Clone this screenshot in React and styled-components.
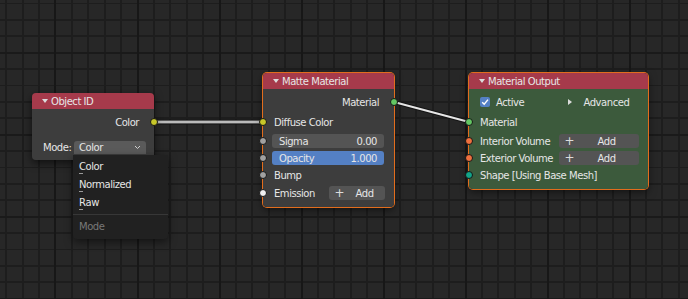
import React from 'react'
import styled, { createGlobalStyle } from 'styled-components'

const GlobalStyle = createGlobalStyle`
  html, body { margin: 0; padding: 0; background: #272727; }
  body { font-family: "DejaVu Sans", "Liberation Sans", sans-serif; }
`

// node editor canvas with the minor / major grid
const Canvas = styled.div`
  position: relative;
  width: 688px;
  height: 299px;
  overflow: hidden;
  background-color: #272727;
  background-image:
    repeating-linear-gradient(to right, #171717 54.5px 56.5px, transparent 56.5px 136.5px),
    repeating-linear-gradient(to bottom, #1a1a1a 51.8px 53.6px, transparent 53.6px 133.8px),
    repeating-linear-gradient(to right, #1d1d1d 5.5px 7.2px, transparent 7.2px 21.9px),
    repeating-linear-gradient(to bottom, #1d1d1d 2.6px 4.3px, transparent 4.3px 19px);
  font-size: 10px;
  letter-spacing: -0.45px;
  color: #e6e6e6;
`

const Wires = styled.svg`
  position: absolute;
  left: 0;
  top: 0;
`

const NodeFrame = styled.div`
  position: absolute;
  left: ${p => p.$x}px;
  top: ${p => p.$y}px;
  width: ${p => p.$w}px;
  border-radius: 4px;
  box-shadow: ${p => p.$selected
    ? '0 0 0 1px #e26d1d, 0 3px 8px rgba(0,0,0,0.55)'
    : '0 3px 8px rgba(0,0,0,0.6)'};
`

const Header = styled.div`
  height: 16px;
  display: flex;
  align-items: center;
  gap: 3px;
  padding-left: 10px;
  background: #a63a4b;
  border-radius: 4px 4px 0 0;
`

const Collapse = styled.span`
  width: 0;
  height: 0;
  border-left: 3px solid transparent;
  border-right: 3px solid transparent;
  border-top: 4px solid #dcdcdc;
`

const Body = styled.div`
  background: ${p => p.$tint};
  border-radius: 0 0 4px 4px;
  padding: 4px 0 ${p => p.$pb}px;
`

const Row = styled.div`
  position: relative;
  height: ${p => p.$h || 18}px;
  margin-top: ${p => p.$mt || 0}px;
  display: flex;
  align-items: center;
  justify-content: ${p => (p.$out ? 'flex-end' : 'flex-start')};
  padding: 0 ${p => (p.$out ? 15 : 10)}px 0 9px;
`

const SplitRow = styled(Row)`
  display: grid;
  grid-template-columns: 1fr 1fr;
  align-items: center;
  padding: 0 9px 0 9px;
`

const Label = styled.span`
  padding-left: 2px;
  white-space: nowrap;
`

const Socket = styled.span`
  position: absolute;
  top: 50%;
  ${p => (p.$side === 'right' ? 'right: -4px;' : 'left: -4px;')}
  width: 6px;
  height: 6px;
  margin-top: -4px;
  border-radius: 50%;
  background: ${p => p.$color};
  border: 1px solid #161616;
`

const Slider = styled.div`
  flex: 1;
  height: 14px;
  display: flex;
  align-items: center;
  justify-content: space-between;
  padding: 0 7px;
  border-radius: 3px;
  background: ${p => (p.$active ? '#5480c4' : '#545454')};
`

const AddButton = styled.div`
  height: 14px;
  display: flex;
  align-items: center;
  padding-left: 6px;
  border-radius: 3px;
  background: #545454;

  .plus {
    font-size: 12px;
    line-height: 1;
    color: #dcdcdc;
  }
  .text {
    flex: 1;
    text-align: center;
  }
`

const Check = styled.span`
  display: inline-flex;
  align-items: center;
  gap: 6px;
  padding-left: 2px;

  .box {
    width: 10px;
    height: 10px;
    border-radius: 2px;
    background: #5480c4;
    display: grid;
    place-items: center;
  }
`

const Expander = styled.span`
  display: inline-flex;
  align-items: center;
  gap: 12px;
  padding-left: 9px;

  &::before {
    content: '';
    width: 0;
    height: 0;
    border-top: 3px solid transparent;
    border-bottom: 3px solid transparent;
    border-left: 4px solid #dcdcdc;
  }
`

const Dropdown = styled.div`
  margin-left: auto;
  width: 72px;
  height: 13px;
  display: flex;
  align-items: center;
  justify-content: space-between;
  padding: 0 5px;
  box-sizing: border-box;
  border-radius: 3px 3px 0 0;
  background: #5a5a5a;
`

const Menu = styled.div`
  position: absolute;
  left: 73px;
  top: 155px;
  width: 95px;
  padding: 2px 0 4px;
  background: #212121;
  border-radius: 0 0 4px 4px;
  box-shadow: 0 3px 8px rgba(0, 0, 0, 0.5);
`

const MenuItem = styled.div`
  height: 18px;
  display: flex;
  align-items: center;
  padding-left: 6px;
  color: ${p => (p.$muted ? '#787878' : '#e6e6e6')};

  .acc {
    position: relative;
  }
  .acc::after {
    content: '';
    position: absolute;
    left: 0;
    bottom: -2px;
    width: 4px;
    height: 1px;
    background: #9a9a9a;
  }
`

const Separator = styled.div`
  height: 1px;
  margin: 3px 0 2px;
  background: #373737;
`

const SOCK = {
  color: '#c7c729',
  float: '#a1a1a1',
  shader: '#63c763',
  volume: '#f0703e',
  vector: '#12a488',
  white: '#f0f0f0',
}

const Node = ({ x, y, w, title, tint = '#3d3d3d', pb = 5, selected, children }) => (
  <NodeFrame $x={x} $y={y} $w={w} $selected={selected}>
    <Header>
      <Collapse />
      <span>{title}</span>
    </Header>
    <Body $tint={tint} $pb={pb}>{children}</Body>
  </NodeFrame>
)

const Wire = ({ x1, y1, x2, y2, core, bright }) => (
  <g>
    <line x1={x1} y1={y1} x2={x2} y2={y2} stroke="#141414" strokeWidth={bright ? 4 : 5} />
    <line x1={x1} y1={y1} x2={x2} y2={y2} stroke={core} strokeWidth={bright ? 2 : 3} />
    {!bright && <line x1={x1} y1={y1} x2={x2} y2={y2} stroke="#dadada" strokeWidth={1.2} />}
  </g>
)

const Acc = ({ text }) => (
  <>
    <span className="acc">{text[0]}</span>
    {text.slice(1)}
  </>
)

export default function App() {
  return (
    <Canvas>
      <GlobalStyle />
      <Wires width="688" height="299">
        <Wire x1={154} y1={122} x2={263} y2={122} core="#9c9c9c" />
        <Wire x1={394} y1={102} x2={469} y2={122} core="#e6e6e6" bright />
      </Wires>

      <Node x={32} y={93} w={122} title="Object ID" pb={4}>
        <Row $out>
          <Label>Color</Label>
          <Socket $side="right" $color={SOCK.color} />
        </Row>
        <Row $mt={7} $h={18} style={{ paddingRight: 8 }}>
          <Label>Mode:</Label>
          <Dropdown>
            <span>Color</span>
            <svg width="7" height="5" viewBox="0 0 7 5">
              <polyline points="1,1 3.5,3.5 6,1" fill="none" stroke="#cfcfcf" strokeWidth="1" />
            </svg>
          </Dropdown>
        </Row>
      </Node>

      <Node x={263} y={73} w={131} title="Matte Material" selected>
        <Row $out>
          <Label>Material</Label>
          <Socket $side="right" $color={SOCK.shader} />
        </Row>
        <Row $mt={2}>
          <Socket $color={SOCK.color} />
          <Label>Diffuse Color</Label>
        </Row>
        <Row $mt={1}>
          <Socket $color={SOCK.float} />
          <Slider>
            <span>Sigma</span>
            <span>0.00</span>
          </Slider>
        </Row>
        <Row $h={16}>
          <Socket $color={SOCK.float} />
          <Slider $active>
            <span>Opacity</span>
            <span>1.000</span>
          </Slider>
        </Row>
        <Row>
          <Socket $color={SOCK.float} />
          <Label>Bump</Label>
        </Row>
        <SplitRow>
          <Socket $color={SOCK.white} />
          <Label>Emission</Label>
          <AddButton>
            <span className="plus">+</span>
            <span className="text">Add</span>
          </AddButton>
        </SplitRow>
      </Node>

      <Node x={469} y={73} w={179} title="Material Output" tint="#3c5a3c" selected>
        <SplitRow>
          <Check>
            <span className="box">
              <svg width="8" height="8" viewBox="0 0 8 8">
                <polyline points="1.2,4.2 3.2,6.2 7,1.6" fill="none" stroke="#fff" strokeWidth="1.4" />
              </svg>
            </span>
            Active
          </Check>
          <Expander>Advanced</Expander>
        </SplitRow>
        <Row $mt={2}>
          <Socket $color={SOCK.shader} />
          <Label>Material</Label>
        </Row>
        <SplitRow $mt={1}>
          <Socket $color={SOCK.volume} />
          <Label>Interior Volume</Label>
          <AddButton>
            <span className="plus">+</span>
            <span className="text">Add</span>
          </AddButton>
        </SplitRow>
        <SplitRow $h={16}>
          <Socket $color={SOCK.volume} />
          <Label>Exterior Volume</Label>
          <AddButton>
            <span className="plus">+</span>
            <span className="text">Add</span>
          </AddButton>
        </SplitRow>
        <Row>
          <Socket $color={SOCK.vector} />
          <Label>Shape [Using Base Mesh]</Label>
        </Row>
      </Node>

      <Menu>
        <MenuItem><Acc text="Color" /></MenuItem>
        <MenuItem><Acc text="Normalized" /></MenuItem>
        <MenuItem><Acc text="Raw" /></MenuItem>
        <Separator />
        <MenuItem $muted>Mode</MenuItem>
      </Menu>
    </Canvas>
  )
}
